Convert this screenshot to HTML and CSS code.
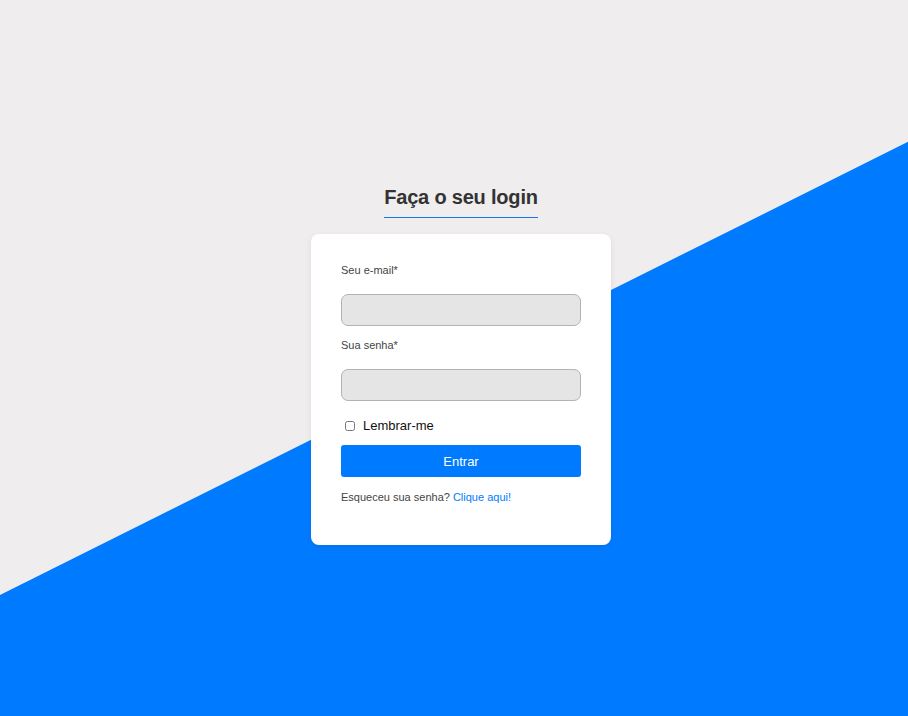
FILE: index.html
```html
<!DOCTYPE html>
<html lang="pt-BR">
<head>
<meta charset="utf-8">
<title>Login</title>
<link rel="stylesheet" href="styles.css">
</head>
<body>
<main class="page">
  <h1 class="title">Faça o seu login</h1>
  <form class="card">
    <label class="label" for="email">Seu e-mail*</label>
    <input class="field" id="email" type="email">
    <label class="label" for="senha">Sua senha*</label>
    <input class="field" id="senha" type="password">
    <label class="remember"><input class="check" type="checkbox"><span>Lembrar-me</span></label>
    <button class="btn" type="button">Entrar</button>
    <p class="forgot">Esqueceu sua senha? <a href="#">Clique aqui!</a></p>
  </form>
</main>
</body>
</html>
```
FILE: styles.css
```css
html, body {
  margin: 0;
  padding: 0;
  height: 100%;
}
body {
  background: #efeded;
  font-family: "Liberation Sans", Arial, sans-serif;
  overflow: hidden;
  position: relative;
}
body::before {
  content: "";
  position: absolute;
  inset: 0;
  background: #007bff;
  clip-path: polygon(0 83.1%, 100% 19.8%, 100% 100%, 0 100%);
  z-index: 0;
}
.page {
  position: relative;
  z-index: 1;
  display: flex;
  flex-direction: column;
  align-items: center;
  padding-top: 185px;
  padding-left: 14px;
}
.title {
  margin: 0;
  font-size: 20px;
  font-weight: bold;
  color: #333;
  line-height: 24px;
  padding-bottom: 8px;
  border-bottom: 1px solid #1a73e8;
  letter-spacing: -0.2px;
}
.card {
  margin-top: 16px;
  width: 240px;
  padding: 30px 30px 41px;
  background: #fff;
  border-radius: 8px;
  box-shadow: 0 2px 6px rgba(0,0,0,0.08);
  display: flex;
  flex-direction: column;
}
.label {
  font-size: 11px;
  line-height: 13px;
  color: #444;
  margin-bottom: 17px;
}
.field {
  box-sizing: border-box;
  width: 240px;
  height: 32px;
  margin: 0 0 13px;
  background: #e5e5e5;
  border: 1px solid #b3b3b3;
  border-radius: 7px;
}
.remember {
  display: flex;
  align-items: center;
  font-size: 13px;
  color: #111;
  margin: 4px 0 11px 4px;
  line-height: 16px;
}
.check {
  width: 10px;
  height: 10px;
  margin: 0 8px 0 0;
}
.btn {
  height: 32px;
  border: none;
  border-radius: 3px;
  background: #007bff;
  color: #fff;
  font-family: "Liberation Sans", Arial, sans-serif;
  font-size: 13px;
}
.forgot {
  margin: 14px 0 0;
  font-size: 11px;
  line-height: 13px;
  color: #444;
}
.forgot a {
  color: #007bff;
  text-decoration: none;
}
```
